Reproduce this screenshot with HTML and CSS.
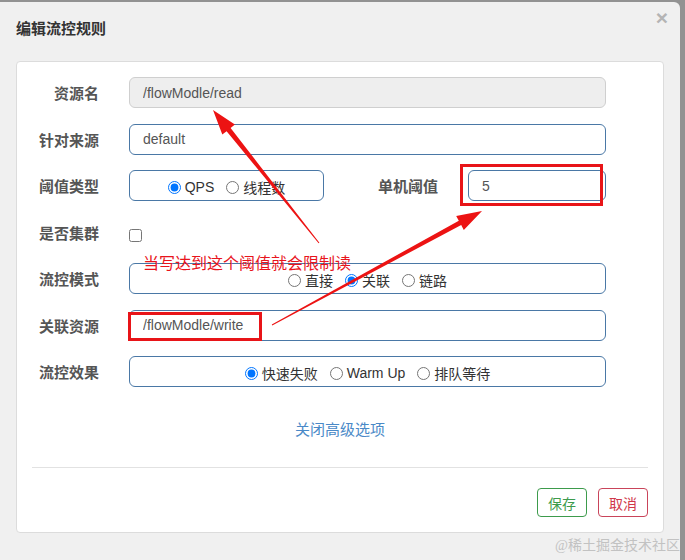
FILE: index.html
```html
<!DOCTYPE html>
<html lang="zh-CN">
<head>
    <meta charset="UTF-8">
    <meta name="viewport" content="width=device-width, initial-scale=1.0">
    <title>编辑流控规则</title>
    <link rel="stylesheet" href="styles.css">
</head>
<body>
    <div class="modal">
        <div class="modal-header">
            <h4 class="modal-title">编辑流控规则</h4>
            <span class="close">&times;</span>
        </div>
        <div class="panel">
            <form class="rule-form">
                <div class="form-row">
                    <label class="row-label">资源名</label>
                    <input class="field" type="text" value="/flowModle/read" disabled>
                </div>
                <div class="form-row">
                    <label class="row-label">针对来源</label>
                    <input class="field" type="text" value="default">
                </div>
                <div class="form-row">
                    <label class="row-label">阈值类型</label>
                    <div class="split">
                        <div class="option-group">
                            <label class="option"><input type="radio" name="grade" checked>QPS</label>
                            <label class="option"><input type="radio" name="grade">线程数</label>
                        </div>
                        <label class="row-label split-label">单机阈值</label>
                        <input class="field" type="text" value="5">
                    </div>
                </div>
                <div class="form-row">
                    <label class="row-label">是否集群</label>
                    <div class="check-cell"><input type="checkbox"></div>
                </div>
                <div class="form-row">
                    <label class="row-label">流控模式</label>
                    <div class="option-group">
                        <label class="option"><input type="radio" name="strategy">直接</label>
                        <label class="option"><input type="radio" name="strategy" checked>关联</label>
                        <label class="option"><input type="radio" name="strategy">链路</label>
                    </div>
                </div>
                <div class="form-row">
                    <label class="row-label">关联资源</label>
                    <input class="field" type="text" value="/flowModle/write">
                </div>
                <div class="form-row">
                    <label class="row-label">流控效果</label>
                    <div class="option-group">
                        <label class="option"><input type="radio" name="behavior" checked>快速失败</label>
                        <label class="option"><input type="radio" name="behavior">Warm Up</label>
                        <label class="option"><input type="radio" name="behavior">排队等待</label>
                    </div>
                </div>
            </form>
            <div class="toggle-advanced"><a href="#">关闭高级选项</a></div>
            <div class="panel-footer">
                <button class="btn btn-save" type="button">保存</button>
                <button class="btn btn-cancel" type="button">取消</button>
            </div>
        </div>
    </div>

    <!-- annotations drawn over the screenshot -->
    <div class="mark mark-threshold"></div>
    <div class="mark mark-ref"></div>
    <div class="note">当写达到这个阈值就会限制读</div>
    <svg class="arrows" width="685" height="560" viewBox="0 0 685 560">
        <polygon points="213,110 234.9,124.6 230.6,128 319.4,242.7 318.6,243.3 226.6,131.2 222.3,134.6" />
        <polygon points="482,211 456.2,215.9 458.8,220.7 271.8,324.6 272.2,325.4 461.2,225.1 463.8,229.9" />
    </svg>
    <div class="watermark">@稀土掘金技术社区</div>
</body>
</html>
```

FILE: styles.css
```css
body {
    margin: 0;
    position: relative;
    width: 685px;
    height: 560px;
    overflow: hidden;
    background-color: #929292;
    font-family: "Liberation Sans", "Noto Sans CJK SC", sans-serif;
}
.modal {
    margin-top: 2px;
    width: 680px;
    height: 558px;
    background-color: #f0f0f0;
    border-radius: 0 6px 0 0;
}
.modal-header {
    display: flex;
    justify-content: space-between;
    align-items: flex-start;
    padding: 15px 12px 0 16px;
}
.modal-title {
    margin: 0;
    font-family: "Noto Sans CJK SC", sans-serif;
    font-size: 15px;
    line-height: 22px;
    font-weight: 600;
    color: #333;
}
.close {
    margin-top: -10px;
    font-size: 21px;
    line-height: 21px;
    font-weight: bold;
    color: #b4b4b4;
}
.panel {
    margin: 22px 16px 0;
    height: 472px;
    box-sizing: border-box;
    background-color: #fff;
    border: 1px solid #dcdcdc;
    border-radius: 4px;
}
.rule-form {
    display: flex;
    flex-direction: column;
    gap: 15.5px;
    margin: 0;
    padding-top: 15px;
}
.form-row {
    display: grid;
    grid-template-columns: 82px 477px;
    column-gap: 30px;
    height: 31px;
    align-items: center;
}
.row-label {
    text-align: right;
    font-family: "Noto Sans CJK SC", sans-serif;
    font-size: 15px;
    font-weight: bold;
    color: #555;
}
.field {
    box-sizing: border-box;
    width: 100%;
    height: 31px;
    margin: 0;
    padding: 0 13px;
    font-family: "Liberation Sans", "Noto Sans CJK SC", sans-serif;
    font-size: 14px;
    color: #555;
    background-color: #fff;
    border: 1px solid #4a78a6;
    border-radius: 6px;
    outline: none;
}
.field:disabled {
    color: #555;
    background-color: #eee;
    border-color: #cfcfcf;
}
.split {
    display: grid;
    grid-template-columns: 195px 1fr 138px;
    align-items: center;
    height: 31px;
}
.split-label {
    padding-right: 30px;
}
.option-group {
    box-sizing: border-box;
    height: 31px;
    display: flex;
    justify-content: center;
    align-items: center;
    gap: 12px;
    padding-top: 3px;
    font-size: 14px;
    color: #333;
    border: 1px solid #4a78a6;
    border-radius: 6px;
}
.option {
    display: flex;
    align-items: center;
}
.option input {
    width: 13px;
    height: 13px;
    margin: 0 4px 0 0;
}
.check-cell {
    display: flex;
    align-items: center;
    padding-top: 6px;
}
.check-cell input {
    width: 13px;
    height: 13px;
    margin: 0;
}
.toggle-advanced {
    margin-top: 33px;
    text-align: center;
    font-size: 15px;
    line-height: 20px;
}
.toggle-advanced a {
    color: #4a89c7;
    text-decoration: none;
}
.panel-footer {
    display: flex;
    justify-content: flex-end;
    gap: 11px;
    margin: 27px 15px 0;
    padding-top: 20px;
    border-top: 1px solid #e2e2e2;
}
.btn {
    height: 29px;
    padding: 0 10px;
    font-family: "Noto Sans CJK SC", sans-serif;
    font-size: 14px;
    background-color: #fff;
    border: 1px solid;
    border-radius: 4px;
}
.btn-save {
    color: #3d9b4c;
    border-color: #3d9b4c;
}
.btn-cancel {
    color: #d0384a;
    border-color: #c9445a;
}
.mark {
    position: absolute;
    box-sizing: border-box;
    border: 3px solid #e81418;
}
.mark-threshold {
    left: 460px;
    top: 164px;
    width: 143px;
    height: 42px;
}
.mark-ref {
    left: 128px;
    top: 312px;
    width: 134px;
    height: 29px;
}
.note {
    position: absolute;
    left: 143px;
    top: 253px;
    font-family: "Noto Sans CJK SC", sans-serif;
    font-size: 16px;
    line-height: 18px;
    color: #e8141c;
}
.arrows {
    position: absolute;
    left: 0;
    top: 0;
    pointer-events: none;
}
.arrows polygon {
    fill: #ec1313;
}
.watermark {
    position: absolute;
    right: 5px;
    top: 536px;
    font-family: "Liberation Serif", "Noto Sans CJK SC", serif;
    font-size: 14px;
    line-height: 20px;
    color: #c2c2c2;
}
```
